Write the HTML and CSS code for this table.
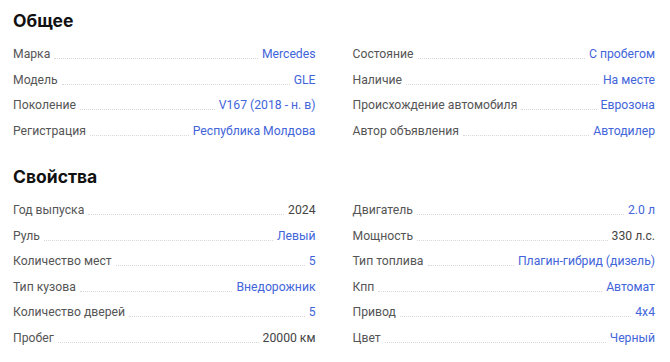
FILE: index.html
```html
<!DOCTYPE html>
<html lang="ru">
<head>
<meta charset="utf-8">
<link rel="stylesheet" href="styles.css">
</head>
<body>
<div class="page">
  <section class="section">
    <h2 class="title">Общее</h2>
    <div class="cols">
      <ul class="list">
        <li class="row"><span class="label">Марка</span><span class="dots"></span><span class="value link">Mercedes</span></li>
        <li class="row"><span class="label">Модель</span><span class="dots"></span><span class="value link">GLE</span></li>
        <li class="row"><span class="label">Поколение</span><span class="dots"></span><span class="value link">V167 (2018 - н. в)</span></li>
        <li class="row"><span class="label">Регистрация</span><span class="dots"></span><span class="value link">Республика Молдова</span></li>
      </ul>
      <ul class="list">
        <li class="row"><span class="label">Состояние</span><span class="dots"></span><span class="value link">С пробегом</span></li>
        <li class="row"><span class="label">Наличие</span><span class="dots"></span><span class="value link">На месте</span></li>
        <li class="row"><span class="label">Происхождение автомобиля</span><span class="dots"></span><span class="value link">Еврозона</span></li>
        <li class="row"><span class="label">Автор объявления</span><span class="dots"></span><span class="value link">Автодилер</span></li>
      </ul>
    </div>
  </section>
  <section class="section">
    <h2 class="title">Свойства</h2>
    <div class="cols">
      <ul class="list">
        <li class="row"><span class="label">Год выпуска</span><span class="dots"></span><span class="value">2024</span></li>
        <li class="row"><span class="label">Руль</span><span class="dots"></span><span class="value link">Левый</span></li>
        <li class="row"><span class="label">Количество мест</span><span class="dots"></span><span class="value link">5</span></li>
        <li class="row"><span class="label">Тип кузова</span><span class="dots"></span><span class="value link">Внедорожник</span></li>
        <li class="row"><span class="label">Количество дверей</span><span class="dots"></span><span class="value link">5</span></li>
        <li class="row"><span class="label">Пробег</span><span class="dots"></span><span class="value">20000 км</span></li>
      </ul>
      <ul class="list">
        <li class="row"><span class="label">Двигатель</span><span class="dots"></span><span class="value link">2.0 л</span></li>
        <li class="row"><span class="label">Мощность</span><span class="dots"></span><span class="value">330 л.с.</span></li>
        <li class="row"><span class="label">Тип топлива</span><span class="dots"></span><span class="value link">Плагин-гибрид (дизель)</span></li>
        <li class="row"><span class="label">Кпп</span><span class="dots"></span><span class="value link">Автомат</span></li>
        <li class="row"><span class="label">Привод</span><span class="dots"></span><span class="value link">4x4</span></li>
        <li class="row"><span class="label">Цвет</span><span class="dots"></span><span class="value link">Черный</span></li>
      </ul>
    </div>
  </section>
</div>
</body>
</html>
```
FILE: styles.css
```css
html, body {
  margin: 0;
  padding: 0;
  background: #ffffff;
}
body {
  font-family: Roboto, "Noto Sans", sans-serif;
  color: #222;
}
.page {
  padding: 9px 15px 0 13px;
}
.section + .section {
  margin-top: 20.6px;
}
.title {
  margin: 0 0 9px 0;
  font-family: Inter, Roboto, sans-serif;
  font-size: 17.5px;
  line-height: 24px;
  font-weight: 700;
  color: #111;
}
.cols {
  display: grid;
  grid-template-columns: 1fr 1fr;
  column-gap: 37px;
}
.list {
  list-style: none;
  margin: 0;
  padding: 0;
}
.row {
  display: flex;
  align-items: baseline;
  height: 25.6px;
  line-height: 25.6px;
  font-size: 12.2px;
}
.label {
  color: #555;
  white-space: nowrap;
}
.dots {
  flex: 1;
  margin: 0 4px;
  border-bottom: 1px dotted #d8d8d8;
  position: relative;
  top: 1px;
}
.value {
  color: #444;
  white-space: nowrap;
}
.value.link {
  color: #4265da;
}
```
